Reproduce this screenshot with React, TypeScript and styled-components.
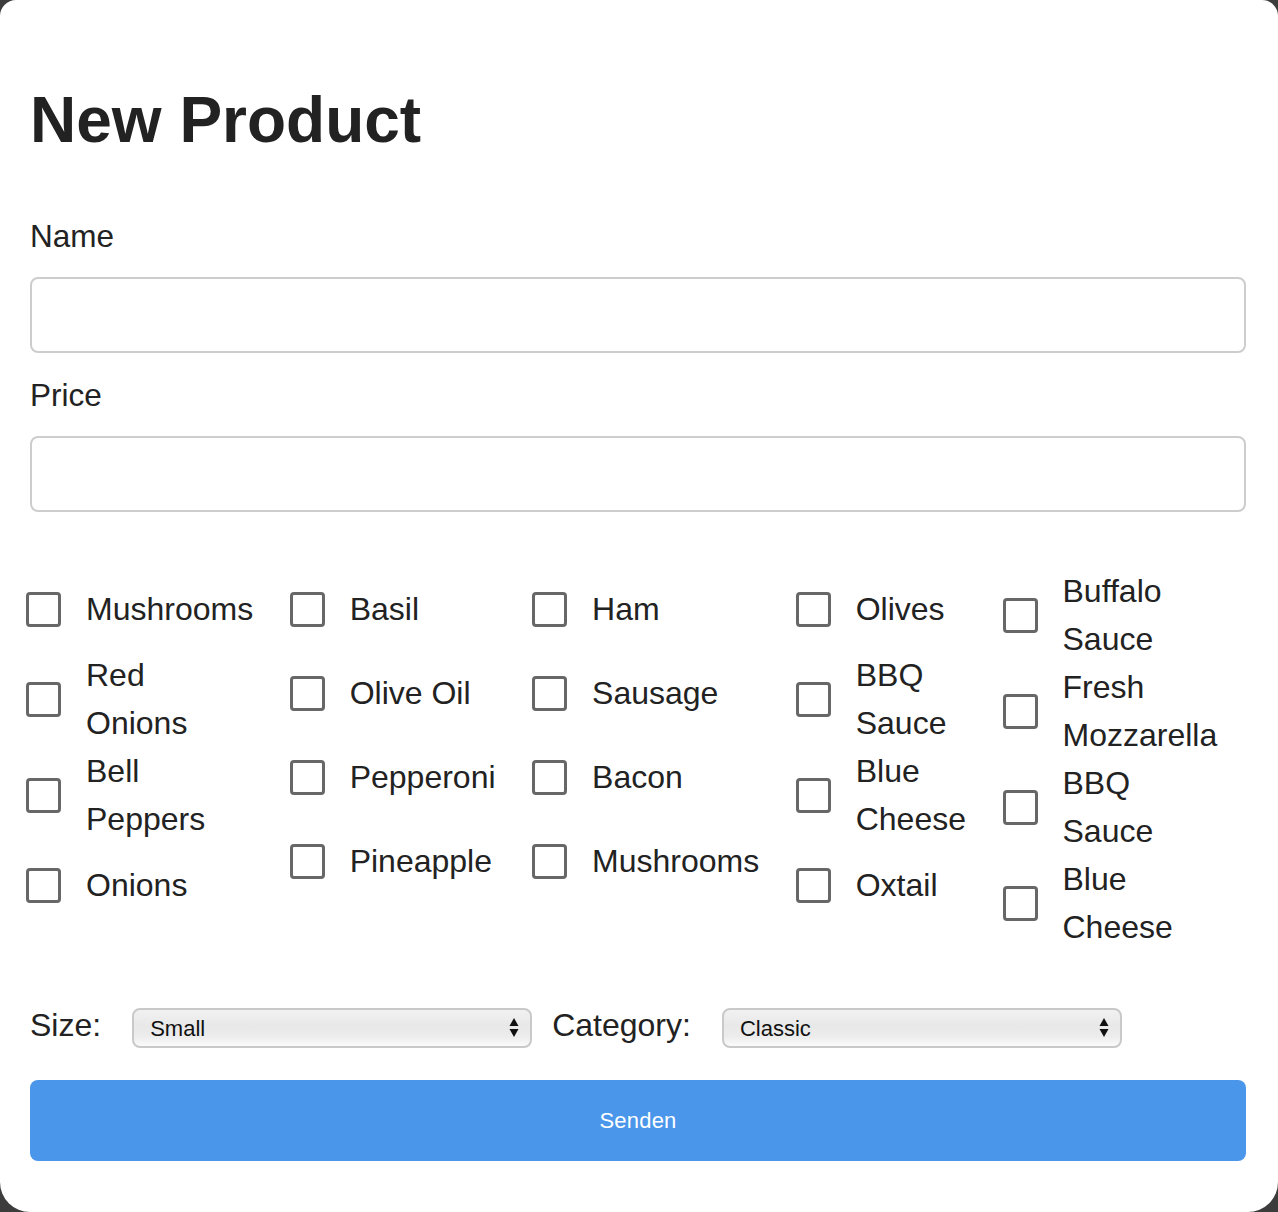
import React from "react";
import styled, { createGlobalStyle } from "styled-components";

const GlobalStyle = createGlobalStyle`
  html, body {
    margin: 0;
    padding: 0;
    background: #3c3c3c;
  }
  * { box-sizing: border-box; }
`;

const Card = styled.div`
  width: 1278px;
  height: 1212px;
  background: #ffffff;
  border-radius: 16px 16px 30px 30px;
  overflow: hidden;
  padding: 83px 32px 0 30px;
  font-family: "Liberation Sans", Arial, Helvetica, sans-serif;
  color: #222222;
`;

const Title = styled.h1`
  margin: 0;
  font-size: 64px;
  line-height: 74px;
  font-weight: 700;
  color: #222222;
`;

const Form = styled.form`
  display: flex;
  flex-direction: column;
`;

const FieldLabel = styled.label<{ $first?: boolean }>`
  display: block;
  font-size: 31.5px;
  line-height: 36px;
  margin-top: ${(p) => (p.$first ? "61px" : "24px")};
`;

const TextInput = styled.input`
  display: block;
  width: 100%;
  height: 76px;
  margin-top: 23px;
  border: 2px solid #cdcdcd;
  border-radius: 8px;
  background: #ffffff;
  font-size: 28px;
  font-family: inherit;
  padding: 0 16px;
  outline: none;
`;

const ToppingGrid = styled.div`
  display: grid;
  grid-template-columns: repeat(5, max-content);
  column-gap: 36.5px;
  margin: 55px 0 0 -4px;
  align-items: start;
`;

const ToppingColumn = styled.div`
  display: flex;
  flex-direction: column;
`;

const ToppingItem = styled.label`
  display: flex;
  align-items: center;
`;

const Check = styled.input`
  appearance: none;
  -webkit-appearance: none;
  flex: none;
  width: 35px;
  height: 35px;
  margin: 24.5px 25px 24.5px 0;
  border: 3px solid #676767;
  border-radius: 4px;
  background: #ffffff;
`;

const ToppingText = styled.span<{ $tight?: boolean }>`
  font-size: 32px;
  line-height: 48px;
  color: #222222;
  width: ${(p) => (p.$tight ? "min-content" : "max-content")};
`;

const SelectRow = styled.div`
  display: flex;
  align-items: center;
  margin-top: 57px;
  height: 40px;
`;

const RowLabel = styled.label`
  font-size: 32px;
  line-height: 36px;
  margin: 0 31px 6px 0;
`;

const SelectWrap = styled.div`
  position: relative;
  width: 400px;
  height: 40px;
  margin-right: 20px;
`;

const Select = styled.select`
  appearance: none;
  -webkit-appearance: none;
  width: 100%;
  height: 100%;
  border: 2px solid #c9c9c9;
  border-radius: 8px;
  background: linear-gradient(#f1f1f1 0%, #e8e8e8 45%, #ededed 75%, #fbfbfb 100%);
  font-family: "Liberation Sans", Arial, sans-serif;
  font-size: 22px;
  color: #111111;
  padding: 0 40px 0 16px;
  outline: none;
`;

const Arrows = styled.svg`
  position: absolute;
  right: 13px;
  top: 10px;
  pointer-events: none;
`;

const SubmitButton = styled.button`
  margin-top: 32px;
  width: 100%;
  height: 81px;
  border: none;
  border-radius: 8px;
  background: #4a96ea;
  color: #ffffff;
  font-family: "Liberation Sans", Arial, sans-serif;
  font-size: 22px;
  letter-spacing: 0.2px;
`;

const columns: { tight: boolean; items: string[] }[] = [
  { tight: true, items: ["Mushrooms", "Red Onions", "Bell Peppers", "Onions"] },
  { tight: false, items: ["Basil", "Olive Oil", "Pepperoni", "Pineapple"] },
  { tight: false, items: ["Ham", "Sausage", "Bacon", "Mushrooms"] },
  { tight: true, items: ["Olives", "BBQ Sauce", "Blue Cheese", "Oxtail"] },
  { tight: true, items: ["Buffalo Sauce", "Fresh Mozzarella", "BBQ Sauce", "Blue Cheese"] },
];

const SelectArrows = () => (
  <Arrows width="10" height="20" viewBox="0 0 10 20">
    <path d="M5 0 L9.5 8 L0.5 8 Z" fill="#111" />
    <path d="M0.5 11 L9.5 11 L5 19 Z" fill="#111" />
  </Arrows>
);

export default function App() {
  return (
    <>
      <GlobalStyle />
      <Card>
        <Title>New Product</Title>
        <Form onSubmit={(e) => e.preventDefault()}>
          <FieldLabel $first htmlFor="name">Name</FieldLabel>
          <TextInput id="name" type="text" />
          <FieldLabel htmlFor="price">Price</FieldLabel>
          <TextInput id="price" type="text" />
          <ToppingGrid>
            {columns.map((col, ci) => (
              <ToppingColumn key={ci}>
                {col.items.map((item, ii) => (
                  <ToppingItem key={ii}>
                    <Check type="checkbox" />
                    <ToppingText $tight={col.tight}>{item}</ToppingText>
                  </ToppingItem>
                ))}
              </ToppingColumn>
            ))}
          </ToppingGrid>
          <SelectRow>
            <RowLabel>Size:</RowLabel>
            <SelectWrap>
              <Select defaultValue="Small">
                <option>Small</option>
                <option>Medium</option>
                <option>Large</option>
              </Select>
              <SelectArrows />
            </SelectWrap>
            <RowLabel>Category:</RowLabel>
            <SelectWrap>
              <Select defaultValue="Classic">
                <option>Classic</option>
                <option>Special</option>
              </Select>
              <SelectArrows />
            </SelectWrap>
          </SelectRow>
          <SubmitButton type="submit">Senden</SubmitButton>
        </Form>
      </Card>
    </>
  );
}
